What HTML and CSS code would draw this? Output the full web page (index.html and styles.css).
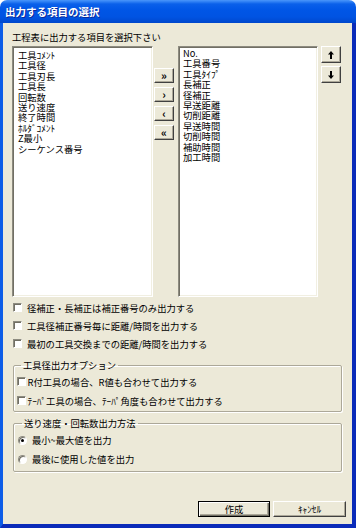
FILE: index.html
```html
<!DOCTYPE html>
<html lang="ja">

<head>
    <meta charset="UTF-8">
    <title>出力する項目の選択</title>
    <link rel="stylesheet" href="styles.css">
</head>

<body>
    <div class="window">
        <div class="titlebar">出力する項目の選択</div>

        <div class="client">
            <div class="prompt">工程表に出力する項目を選択下さい</div>

            <div class="lists">
                <div class="listbox left">
                    <div>工具ｺﾒﾝﾄ</div>
                    <div>工具径</div>
                    <div>工具刃長</div>
                    <div>工具長</div>
                    <div>回転数</div>
                    <div>送り速度</div>
                    <div>終了時間</div>
                    <div>ﾎﾙﾀﾞｺﾒﾝﾄ</div>
                    <div>Z最小</div>
                    <div>シーケンス番号</div>
                </div>

                <div class="movebtns">
                    <button class="btn small">»</button>
                    <button class="btn small">›</button>
                    <button class="btn small">‹</button>
                    <button class="btn small">«</button>
                </div>

                <div class="listbox right">
                    <div>No.</div>
                    <div>工具番号</div>
                    <div>工具ﾀｲﾌﾟ</div>
                    <div>長補正</div>
                    <div>径補正</div>
                    <div>早送距離</div>
                    <div>切削距離</div>
                    <div>早送時間</div>
                    <div>切削時間</div>
                    <div>補助時間</div>
                    <div>加工時間</div>
                </div>

                <div class="orderbtns">
                    <button class="btn arrow">
                        <svg width="6" height="8" viewBox="0 0 6 8"><polygon points="3,0 6,3.5 4,3.5 4,8 2,8 2,3.5 0,3.5" fill="#000"/></svg>
                    </button>
                    <button class="btn arrow">
                        <svg width="6" height="8" viewBox="0 0 6 8"><polygon points="3,8 6,4.5 4,4.5 4,0 2,0 2,4.5 0,4.5" fill="#000"/></svg>
                    </button>
                </div>
            </div>

            <div class="checks">
                <div class="check"><span class="box"></span>径補正・長補正は補正番号のみ出力する</div>
                <div class="check"><span class="box"></span>工具径補正番号毎に距離/時間を出力する</div>
                <div class="check"><span class="box"></span>最初の工具交換までの距離/時間を出力する</div>
            </div>

            <fieldset class="group opts">
                <legend>工具径出力オプション</legend>
                <div class="check"><span class="box"></span>R付工具の場合、R値も合わせて出力する</div>
                <div class="check"><span class="box"></span>ﾃｰﾊﾟ工具の場合、ﾃｰﾊﾟ角度も合わせて出力する</div>
            </fieldset>

            <fieldset class="group method">
                <legend>送り速度・回転数出力方法</legend>
                <div class="option"><span class="radio on"></span>最小~最大値を出力</div>
                <div class="option"><span class="radio"></span>最後に使用した値を出力</div>
            </fieldset>

            <div class="actions">
                <button class="btn push default">作成</button>
                <button class="btn push">ｷｬﾝｾﾙ</button>
            </div>
        </div>
    </div>
</body>

</html>
```

FILE: styles.css
```css
body {
    margin: 0;
    background: #fff;
    font-family: "Noto Sans CJK JP", "Noto Sans", sans-serif;
    font-size: 9.3px;
    color: #000;
}

.window {
    width: 356px;
    height: 528px;
    display: flex;
    flex-direction: column;
}

.titlebar {
    flex: none;
    height: 23px;
    line-height: 23px;
    padding-left: 5px;
    border-radius: 7px 7px 0 0;
    background: linear-gradient(#4a96fa 0, #2a7cf3 2px, #0a60ea 4px, #0056e6 10px, #0053e2 17px, #0047cc 23px);
    color: #fff;
    font-size: 10.5px;
    font-weight: bold;
    text-shadow: 1px 1px #0a2a9c;
}

.client {
    flex: 1;
    min-height: 0;
    display: flex;
    flex-direction: column;
    background: #ece9d8;
    border-left: 3px solid #0d5de7;
    border-right: 4px solid #0a2bb9;
    border-bottom: 4px solid #0a2bb9;
    padding: 8px 6px 7px 9px;
}

.prompt {
    height: 12px;
    line-height: 12px;
    margin-bottom: 3px;
}

.lists {
    display: flex;
    height: 251px;
    flex: none;
}

.listbox {
    box-sizing: border-box;
    height: 100%;
    background: #fff;
    border: 1px solid;
    border-color: #8d8b80 #fff #fff #8d8b80;
    box-shadow: inset 1px 1px #716f64, inset -1px -1px #f1efe2;
    line-height: 10.4px;
    white-space: nowrap;
}

.listbox.left {
    width: 141px;
    padding: 3px 5px;
}

.listbox.right {
    width: 140px;
    margin-left: 4px;
    padding: 1px 4px;
}

.movebtns {
    width: 20px;
    margin-left: 1px;
    padding-top: 22px;
    display: flex;
    flex-direction: column;
    gap: 4px;
}

.orderbtns {
    width: 20px;
    margin-left: 3px;
    display: flex;
    flex-direction: column;
    gap: 3px;
}

.btn {
    box-sizing: border-box;
    margin: 0;
    padding: 0;
    background: #ece9d8;
    border: 1px solid;
    border-color: #fff #404040 #404040 #fff;
    box-shadow: inset -1px -1px #aca899;
    font-family: inherit;
    font-size: 9.3px;
    color: #000;
    display: flex;
    align-items: center;
    justify-content: center;
}

.btn.small {
    width: 20px;
    height: 15px;
    font-size: 11px;
    font-weight: bold;
    line-height: 1;
}

.btn.arrow {
    width: 20px;
    height: 17px;
}

.checks {
    margin: 1.5px 0 0 1px;
}

.check,
.option {
    display: flex;
    align-items: center;
    white-space: nowrap;
}

.checks .check {
    height: 18px;
    gap: 5px;
}

.box,
.radio {
    flex: none;
    box-sizing: border-box;
    width: 9px;
    height: 9px;
    background: #fff;
    border: 1px solid;
    border-color: #8d8b80 #fff #fff #8d8b80;
    box-shadow: inset 1px 1px #716f64;
}

.radio {
    border-radius: 50%;
    display: flex;
    align-items: center;
    justify-content: center;
}

.radio.on::after {
    content: "";
    width: 3px;
    height: 3px;
    border-radius: 50%;
    background: #000;
}

.group {
    min-width: 0;
    margin: 0 4px 0 1px;
    border: 1px solid #aca899;
    border-radius: 2px;
    box-shadow: inset 1px 1px #fff, 1px 1px #fff;
}

.group legend {
    margin-left: 4px;
    padding: 0 2px;
    line-height: 12px;
}

.opts {
    margin-top: 6.5px;
    padding: 1px 0 1px 3px;
}

.opts .check {
    height: 19px;
    gap: 1.5px;
}

.method {
    margin-top: 5px;
    padding: 1.5px 0 2.5px 4px;
}

.method .option {
    height: 19px;
    gap: 5px;
}

.actions {
    margin-top: auto;
    display: flex;
    justify-content: flex-end;
    gap: 3px;
}

.btn.push {
    width: 72px;
    height: 16px;
}

.btn.push + .btn.push {
    width: 73px;
}

.btn.push.default {
    border-color: #000;
    box-shadow: inset 1px 1px #fff, inset -1px -1px #716f64, inset -2px -2px #aca899;
}
```
